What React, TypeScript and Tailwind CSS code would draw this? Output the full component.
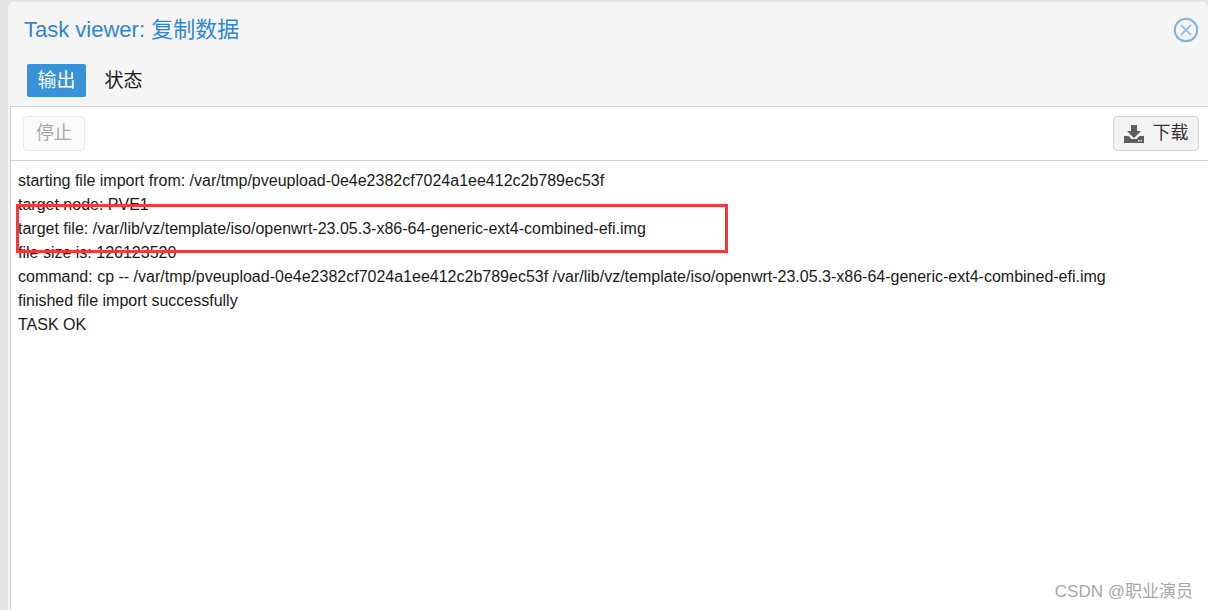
import React from 'react';

const sans = "font-['Liberation_Sans','Noto_Sans_CJK_SC',sans-serif]";

const logLines = [
    'starting file import from: /var/tmp/pveupload-0e4e2382cf7024a1ee412c2b789ec53f',
    'target node: PVE1',
    'target file: /var/lib/vz/template/iso/openwrt-23.05.3-x86-64-generic-ext4-combined-efi.img',
    'file size is: 126123520',
    'command: cp -- /var/tmp/pveupload-0e4e2382cf7024a1ee412c2b789ec53f /var/lib/vz/template/iso/openwrt-23.05.3-x86-64-generic-ext4-combined-efi.img',
    'finished file import successfully',
    'TASK OK',
];

const CloseIcon = () => (
    <svg width="26" height="26" viewBox="0 0 26 26" fill="none">
        <circle cx="13" cy="13" r="11.2" stroke="#7fb2dc" strokeWidth="2" />
        <path d="M8 8 L18 18 M18 8 L8 18" stroke="#9cc4e4" strokeWidth="2" />
    </svg>
);

const DownloadIcon = () => (
    <svg width="20" height="18" viewBox="0 0 20 18" fill="#5f5f5f">
        <path d="M7 0 H13 V6 H17 L10 13 L3 6 H7 Z" />
        <path d="M0 11 H4.5 L7.5 14 H12.5 L15.5 11 H20 V18 H0 Z" />
        <rect x="14" y="15" width="1.4" height="1.4" fill="#f3f3f3" />
        <rect x="16.5" y="15" width="1.4" height="1.4" fill="#f3f3f3" />
    </svg>
);

export default function App() {
    return (
        <div className={`w-[1208px] h-[610px] overflow-hidden bg-[#e4e4e4] pt-[2px] pl-[8px] ${sans}`}>
            <div className="w-[1200px] h-[608px] rounded-tl-[5px] rounded-tr-[5px] bg-[#f5f5f5] flex flex-col">
                {/* Header */}
                <div className="h-[56px] shrink-0 flex items-center justify-between pl-[16px] pr-[9px]">
                    <h3 className="text-[22px] leading-[56px] text-[#2e86d0] font-normal">Task viewer: 复制数据</h3>
                    <CloseIcon />
                </div>

                {/* Tabs */}
                <div className="h-[48px] shrink-0 flex items-start gap-[8px] pl-[19px] pt-[6px]">
                    <div className="w-[59px] h-[33px] rounded-[2px] bg-[#3892d8] text-white text-[19px] leading-[33px] text-center">输出</div>
                    <div className="w-[59px] h-[33px] text-[#1a1a1a] text-[19px] leading-[33px] text-center">状态</div>
                </div>

                {/* Body */}
                <div className="flex-1 ml-[2px] bg-white border-t border-l border-[#cfcfcf] flex flex-col relative">
                    <div className="h-[54px] shrink-0 border-b border-[#cfcfcf] flex items-center justify-between pl-[12px] pr-[9px]">
                        <button className="w-[62px] h-[35px] rounded-[4px] border border-[#e8e8e8] bg-[#fafafa] text-[#a8a8a8] text-[18px]">停止</button>
                        <button className="w-[86px] h-[35px] rounded-[4px] border border-[#d4d4d4] bg-[#f3f3f3] text-[#333333] text-[18px] flex items-center justify-center gap-[9px]">
                            <DownloadIcon />
                            <span>下载</span>
                        </button>
                    </div>

                    <div className="pl-[7px] pt-[8px] text-[16px] leading-[24px] text-[#1a1a1a] whitespace-nowrap">
                        {logLines.map((line) => (
                            <div key={line}>{line}</div>
                        ))}
                    </div>

                    {/* Red highlight drawn over the log */}
                    <div className="absolute left-[5px] top-[97px] w-[712px] h-[49px] border-[3px] border-[#f33a3a]" />

                    {/* Watermark */}
                    <div className="absolute right-[15px] bottom-[6px] text-[17px] leading-[24px] text-[#a6a6a6]">CSDN @职业演员</div>
                </div>
            </div>
        </div>
    );
}
